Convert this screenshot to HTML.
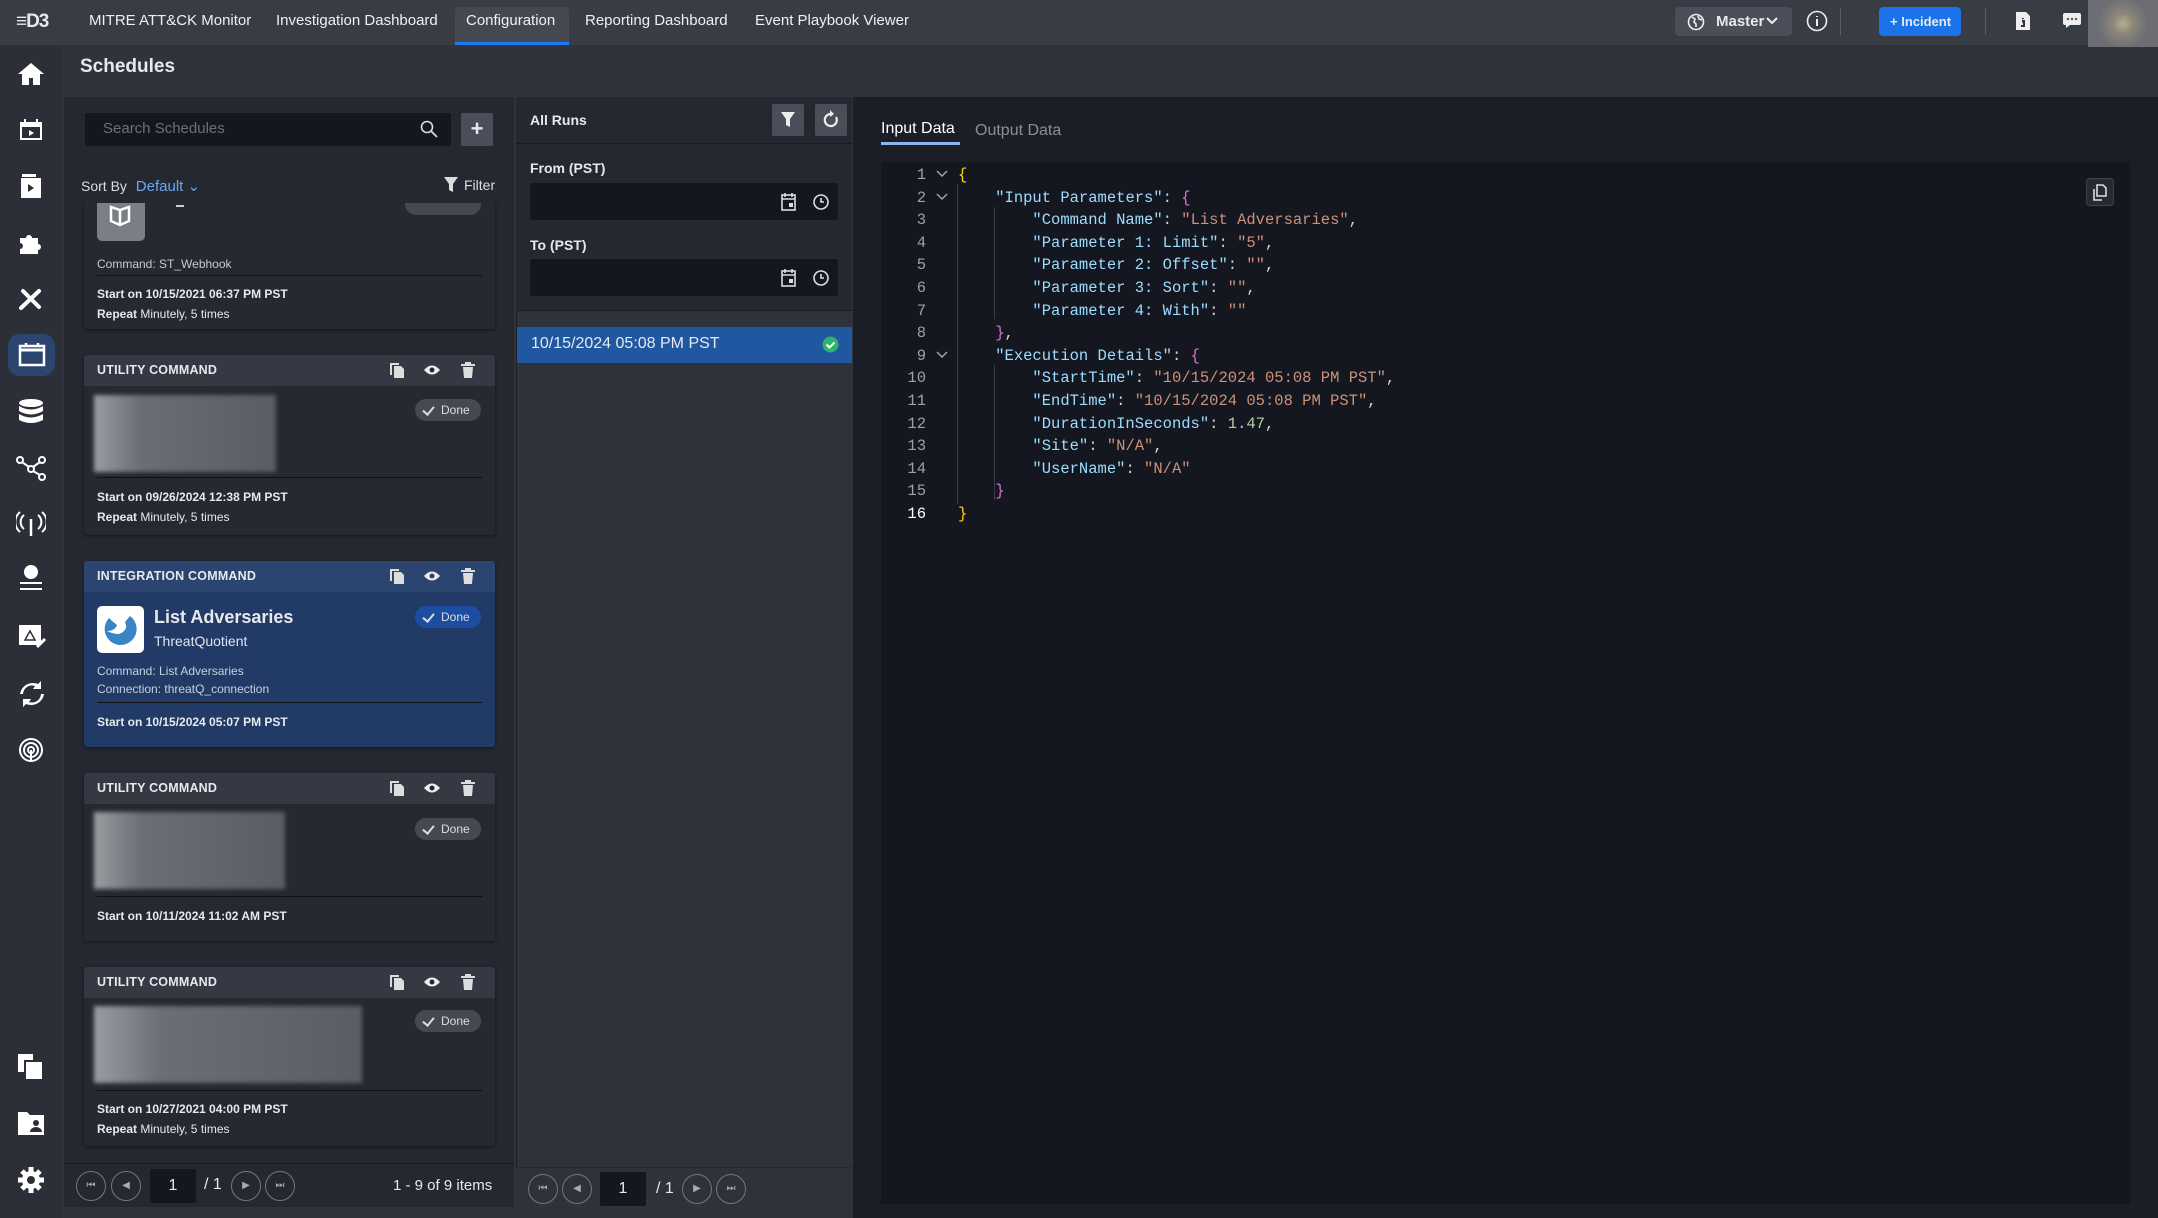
<!DOCTYPE html>
<html><head><meta charset="utf-8"><style>
*{box-sizing:border-box;margin:0;padding:0}
body{width:2158px;height:1218px;background:#30333c;font-family:"Liberation Sans",sans-serif;color:#e8e9ec;position:relative;overflow:hidden}
.a{position:absolute}
.top{left:0;top:0;width:2158px;height:45px;background:#383c45}
.nav{top:12px;font-size:15px;color:#f0f0f0}
.side{left:0;top:45px;width:63px;height:1173px;background:#2c2f37}
.card{position:absolute;left:84px;width:411px;background:#262930;border-radius:3px;box-shadow:0 1px 3px rgba(0,0,0,.5)}
.ch{position:absolute;left:0;top:0;width:100%;height:31px;background:#353943;border-radius:3px 3px 0 0}
.ct{position:absolute;left:13px;top:8px;font-size:12.5px;font-weight:bold;letter-spacing:.2px}
.ic{position:absolute;top:7px;width:16px;height:16px}
.done{position:absolute;right:14px;width:66px;height:22px;border-radius:11px;background:#454952;font-size:12px;line-height:22px;padding-left:26px;color:#ddd}
.done:before{content:"";position:absolute;left:10px;top:5px;width:5px;height:9px;border:solid #ddd;border-width:0 2px 2px 0;transform:rotate(40deg)}
.blur{position:absolute;left:10px;background:linear-gradient(90deg,#9a9ca2 0%,#6b6e75 25%,#5a5d65 100%);filter:blur(2px)}
.hr{position:absolute;left:13px;right:13px;height:1px;background:#111}
.st{position:absolute;left:13px;font-size:12px;font-weight:bold}
.rp{position:absolute;left:13px;font-size:12px}
.code{font-family:"Liberation Mono",monospace;font-size:15.5px;white-space:pre}
.ln{position:absolute;left:881px;width:45px;text-align:right;color:#9ba0aa;font-family:"Liberation Mono",monospace;font-size:15.5px}
.k{color:#9cdcfe}.s{color:#ce9178}.n{color:#b5cea8}.p{color:#da70d6}.y{color:#ffd700}.w{color:#d4d4d4}
.pg{width:30px;height:30px;border-radius:50%;border:1px solid #777;font-size:10px;color:#aaa;text-align:center;line-height:28px}
.pbox{background:#14171f;border-radius:2px;width:46px;height:34px;font-size:16px;text-align:center;line-height:34px}
</style></head><body>
<div class="a top"></div>
<div class="a" style="left:16px;top:11px;font-size:19px;font-weight:bold;letter-spacing:-1px">≡D3</div>
<div class="a nav" style="left:89px">MITRE ATT&amp;CK Monitor</div>
<div class="a nav" style="left:276px">Investigation Dashboard</div>
<div class="a" style="left:455px;top:7px;width:114px;height:38px;background:#444851;border-radius:4px 4px 0 0"></div>
<div class="a" style="left:455px;top:42px;width:114px;height:3px;background:#1e7af0"></div>
<div class="a nav" style="left:466px">Configuration</div>
<div class="a nav" style="left:585px">Reporting Dashboard</div>
<div class="a nav" style="left:755px">Event Playbook Viewer</div>
<div class="a" style="left:1675px;top:7px;width:117px;height:29px;background:#4a4e58;border-radius:4px"></div>
<svg class="a" style="left:1687px;top:13px" width="18" height="18" viewBox="0 0 18 18"><circle cx="9" cy="9" r="7.5" fill="none" stroke="#eee" stroke-width="1.6"/><path d="M5 4l3 2-1 3 2 2v3M11 3l1 3 3 1" stroke="#eee" stroke-width="1.6" fill="none"/></svg>
<div class="a" style="left:1716px;top:13px;font-size:15px;font-weight:bold">Master</div>
<svg class="a" style="left:1766px;top:17px" width="12" height="8"><path d="M1 1l5 5 5-5" stroke="#eee" stroke-width="2" fill="none"/></svg>
<svg class="a" style="left:1806px;top:10px" width="22" height="22"><circle cx="11" cy="11" r="9.5" fill="none" stroke="#eee" stroke-width="1.6"/><path d="M11 9v7M11 6v1" stroke="#eee" stroke-width="2"/></svg>
<div class="a" style="left:1840px;top:8px;width:1px;height:27px;background:#5a5e68"></div>
<div class="a" style="left:1879px;top:7px;width:82px;height:29px;background:#1a73e8;border-radius:4px;font-size:13px;font-weight:bold;line-height:29px;padding-left:11px">+ Incident</div>
<div class="a" style="left:1985px;top:8px;width:1px;height:27px;background:#5a5e68"></div>
<svg class="a" style="left:2015px;top:11px" width="16" height="20"><path d="M1 1h10l4 4v14H1z" fill="#eee"/><path d="M8 7v1M7 10h2v5M6 15h4" stroke="#333" stroke-width="2"/></svg>
<svg class="a" style="left:2062px;top:12px" width="20" height="17"><path d="M3 1h14a2 2 0 012 2v8a2 2 0 01-2 2H8l-4 3v-3H3a2 2 0 01-2-2V3a2 2 0 012-2z" fill="#eee"/><circle cx="6" cy="7" r="1.2" fill="#555"/><circle cx="10" cy="7" r="1.2" fill="#555"/><circle cx="14" cy="7" r="1.2" fill="#555"/></svg>
<div class="a" style="left:2088px;top:0;width:70px;height:47px;background:radial-gradient(circle at 50% 50%,#b8ad8e 0,#8a8678 25%,#6c6e74 60%)"></div>

<div class="a side"></div>
<div class="a" style="left:8px;top:334px;width:47px;height:42px;background:#2c4470;border-radius:12px"></div>
<svg class="a" style="left:16px;top:61px" width="30" height="26"><path d="M15 2L2 13h4v11h7v-7h4v7h7V13h4z" fill="#fff"/></svg>
<svg class="a" style="left:18px;top:117px" width="26" height="26"><rect x="2" y="5" width="22" height="18" fill="#fff"/><rect x="4" y="10" width="18" height="11" fill="#2c2f37"/><path d="M11 13l5 3-5 3z" fill="#fff"/><path d="M7 2v5M19 2v5" stroke="#fff" stroke-width="2"/></svg>
<svg class="a" style="left:19px;top:173px" width="24" height="26"><path d="M3 1h14v3H3z" fill="#fff"/><rect x="2" y="5" width="20" height="20" fill="#fff"/><path d="M9 11l6 4-6 4z" fill="#2c2f37"/></svg>
<svg class="a" style="left:17px;top:229px" width="28" height="26"><path d="M3 9h6a3 3 0 116 0h6v6a3 3 0 110 6v4H3v-5a3 3 0 100-6z" fill="#fff"/></svg>
<svg class="a" style="left:17px;top:286px" width="28" height="26"><path d="M4 22L22 5M6 5l16 16" stroke="#fff" stroke-width="4" stroke-linecap="round"/></svg>
<svg class="a" style="left:18px;top:342px" width="28" height="26"><rect x="2" y="4" width="24" height="19" fill="none" stroke="#fff" stroke-width="2.5"/><path d="M2 8h24" stroke="#fff" stroke-width="3"/><path d="M8 1v4M20 1v4" stroke="#fff" stroke-width="2.5"/></svg>
<svg class="a" style="left:17px;top:398px" width="28" height="28"><ellipse cx="14" cy="5" rx="12" ry="4" fill="#fff"/><path d="M2 8q12 7 24 0v5q-12 7-24 0zM2 16q12 7 24 0v6q-12 6-24 0z" fill="#fff"/></svg>
<svg class="a" style="left:15px;top:455px" width="32" height="26"><circle cx="5" cy="5" r="3" fill="none" stroke="#fff" stroke-width="2"/><circle cx="16" cy="14" r="3" fill="none" stroke="#fff" stroke-width="2"/><circle cx="27" cy="5" r="3" fill="none" stroke="#fff" stroke-width="2"/><circle cx="27" cy="22" r="3" fill="none" stroke="#fff" stroke-width="2"/><path d="M7 7l7 5M18 12l7-5M18 16l7 4" stroke="#fff" stroke-width="2"/></svg>
<svg class="a" style="left:16px;top:510px" width="30" height="28"><path d="M8 5a9 9 0 000 14M4 2a13 13 0 000 20M22 5a9 9 0 010 14M26 2a13 13 0 010 20" fill="none" stroke="#fff" stroke-width="2"/><path d="M15 9v17" stroke="#fff" stroke-width="2.5"/></svg>
<svg class="a" style="left:17px;top:563px" width="28" height="30"><circle cx="14" cy="9" r="7" fill="#fff"/><path d="M3 20h22M3 26h22" stroke="#fff" stroke-width="2"/></svg>
<svg class="a" style="left:17px;top:622px" width="30" height="28"><rect x="2" y="3" width="22" height="20" fill="#fff"/><path d="M8 18l5-9 5 9z" fill="none" stroke="#2c2f37" stroke-width="1.5"/><path d="M20 25l8-8" stroke="#fff" stroke-width="3"/></svg>
<svg class="a" style="left:18px;top:680px" width="28" height="28"><path d="M5 14a9 9 0 0112-8l-2 3h8V1l-3 3A13 13 0 002 14zM23 14a9 9 0 01-12 8l2-3H5v8l3-3a13 13 0 0018-10z" fill="#fff"/></svg>
<svg class="a" style="left:16px;top:735px" width="30" height="30"><g fill="none" stroke="#fff" stroke-width="2"><circle cx="15" cy="15" r="3"/><circle cx="15" cy="15" r="7"/><circle cx="15" cy="15" r="11"/><path d="M15 15v12"/></g></svg>
<svg class="a" style="left:17px;top:1053px" width="28" height="28"><rect x="1" y="1" width="15" height="18" fill="#fff"/><rect x="8" y="8" width="18" height="19" fill="#fff" stroke="#2c2f37" stroke-width="2"/></svg>
<svg class="a" style="left:17px;top:1110px" width="28" height="26"><path d="M1 2h9l3 3h14v20H1z" fill="#fff"/><circle cx="19" cy="13" r="3" fill="#2c2f37"/><path d="M13 22a6 5 0 0112 0z" fill="#2c2f37"/></svg>
<svg class="a" style="left:17px;top:1166px" width="28" height="28"><circle cx="14" cy="14" r="9" fill="#fff"/><g stroke="#fff" stroke-width="5"><path d="M14 1v26M1 14h26M5 5l18 18M23 5L5 23"/></g><circle cx="14" cy="14" r="4" fill="#2c2f37"/></svg>

<div class="a" style="left:80px;top:56px;font-size:19px;font-weight:bold">Schedules</div>

<!-- left panel -->
<div class="a" style="left:64px;top:97px;width:450px;height:1110px;background:#252830"></div>
<div class="a" style="left:85px;top:113px;width:366px;height:33px;background:#14171f;border-radius:2px"></div>
<div class="a" style="left:103px;top:120px;font-size:15px;color:#6b707a">Search Schedules</div>
<svg class="a" style="left:420px;top:120px" width="18" height="18"><circle cx="7" cy="7" r="5.5" fill="none" stroke="#ddd" stroke-width="1.6"/><path d="M11 11l6 6" stroke="#ddd" stroke-width="1.8"/></svg>
<div class="a" style="left:461px;top:113px;width:32px;height:33px;background:#4a4e58;border-radius:2px;text-align:center;font-size:22px;line-height:31px;font-weight:bold">+</div>
<div class="a" style="left:81px;top:177px;font-size:14px;color:#ddd">Sort By <span style="color:#6aa8ef;font-size:15px;margin-left:5px">Default ⌄</span></div>
<svg class="a" style="left:444px;top:177px" width="14" height="15"><path d="M0 0h14L9 7v8L5 13V7z" fill="#ddd"/></svg>
<div class="a" style="left:464px;top:177px;font-size:14px;color:#ddd">Filter</div>

<div class="a" style="left:64px;top:203px;width:450px;height:200px;overflow:hidden">
 <div class="card" style="top:-40px;left:20px;height:166px">
  <div style="position:absolute;left:13px;top:30px;width:48px;height:48px;background:#7b7e86;border-radius:5px"></div>
  <svg style="position:absolute;left:24px;top:40px" width="24" height="24"><path d="M3 4l9 3 9-3v14l-9 4-9-4z" fill="none" stroke="#fff" stroke-width="2.5"/><path d="M12 7v15" stroke="#fff" stroke-width="2.5"/></svg>
  <div style="position:absolute;left:92px;top:42px;width:8px;height:2px;background:#ccc"></div>
  <div style="position:absolute;right:14px;top:30px;width:76px;height:22px;border-radius:11px;background:#454952"></div>
  <div class="rp" style="top:94px;color:#c8cad0">Command: ST_Webhook</div>
  <div class="hr" style="top:112px"></div>
  <div class="st" style="top:124px">Start on 10/15/2021 06:37 PM PST</div>
  <div class="rp" style="top:144px"><b>Repeat</b> Minutely, 5 times</div>
 </div>
</div>

<div class="card" style="top:355px;height:180px">
 <div class="ch"></div><div class="ct">UTILITY COMMAND</div>
 <svg class="ic" style="left:305px" viewBox="0 0 16 16"><path d="M1 1h9v2H3v10H1zM5 4h7l3 3v9H5z" fill="#ddd"/></svg>
 <svg class="ic" style="left:340px" viewBox="0 0 16 16"><path d="M0 8q8-9 16 0-8 9-16 0z" fill="#eee"/><circle cx="8" cy="8" r="2.5" fill="#262930"/></svg>
 <svg class="ic" style="left:376px" viewBox="0 0 16 16"><path d="M1 2h14v2H1zM5 0h6v2H5zM3 5h10l-1 11H4z" fill="#ddd"/></svg>
 <div class="blur" style="top:40px;width:182px;height:77px"></div>
 <div class="done" style="top:44px">Done</div>
 <div class="hr" style="top:122px"></div>
 <div class="st" style="top:135px">Start on 09/26/2024 12:38 PM PST</div>
 <div class="rp" style="top:155px"><b>Repeat</b> Minutely, 5 times</div>
</div>

<div class="card" style="top:561px;height:186px;background:#213a66">
 <div class="ch" style="background:#2c4470"></div><div class="ct">INTEGRATION COMMAND</div>
 <svg class="ic" style="left:305px" viewBox="0 0 16 16"><path d="M1 1h9v2H3v10H1zM5 4h7l3 3v9H5z" fill="#ddd"/></svg>
 <svg class="ic" style="left:340px" viewBox="0 0 16 16"><path d="M0 8q8-9 16 0-8 9-16 0z" fill="#eee"/><circle cx="8" cy="8" r="2.5" fill="#2c4470"/></svg>
 <svg class="ic" style="left:376px" viewBox="0 0 16 16"><path d="M1 2h14v2H1zM5 0h6v2H5zM3 5h10l-1 11H4z" fill="#ddd"/></svg>
 <div style="position:absolute;left:13px;top:45px;width:47px;height:47px;background:#fff;border-radius:5px"></div>
 <svg style="position:absolute;left:17px;top:49px" width="40" height="40"><path d="M8 8a16 16 0 1021 -2l-5 6q4 8-6 12-6 0-12 -3q8 0 10-6-4-3-8-7z" fill="#3a84c6"/></svg>
 <div style="position:absolute;left:70px;top:46px;font-size:18px;font-weight:bold">List Adversaries</div>
 <div style="position:absolute;left:70px;top:72px;font-size:14px;color:#e0e4ee">ThreatQuotient</div>
 <div class="done" style="top:45px;background:#1c4da0">Done</div>
 <div class="rp" style="top:103px;color:#c8d0e0">Command: List Adversaries</div>
 <div class="rp" style="top:121px;color:#c8d0e0">Connection: threatQ_connection</div>
 <div class="hr" style="top:141px"></div>
 <div class="st" style="top:154px">Start on 10/15/2024 05:07 PM PST</div>
</div>

<div class="card" style="top:773px;height:168px">
 <div class="ch"></div><div class="ct">UTILITY COMMAND</div>
 <svg class="ic" style="left:305px" viewBox="0 0 16 16"><path d="M1 1h9v2H3v10H1zM5 4h7l3 3v9H5z" fill="#ddd"/></svg>
 <svg class="ic" style="left:340px" viewBox="0 0 16 16"><path d="M0 8q8-9 16 0-8 9-16 0z" fill="#eee"/><circle cx="8" cy="8" r="2.5" fill="#262930"/></svg>
 <svg class="ic" style="left:376px" viewBox="0 0 16 16"><path d="M1 2h14v2H1zM5 0h6v2H5zM3 5h10l-1 11H4z" fill="#ddd"/></svg>
 <div class="blur" style="top:39px;width:191px;height:77px"></div>
 <div class="done" style="top:45px">Done</div>
 <div class="hr" style="top:123px"></div>
 <div class="st" style="top:136px">Start on 10/11/2024 11:02 AM PST</div>
</div>

<div class="card" style="top:967px;height:179px">
 <div class="ch"></div><div class="ct">UTILITY COMMAND</div>
 <svg class="ic" style="left:305px" viewBox="0 0 16 16"><path d="M1 1h9v2H3v10H1zM5 4h7l3 3v9H5z" fill="#ddd"/></svg>
 <svg class="ic" style="left:340px" viewBox="0 0 16 16"><path d="M0 8q8-9 16 0-8 9-16 0z" fill="#eee"/><circle cx="8" cy="8" r="2.5" fill="#262930"/></svg>
 <svg class="ic" style="left:376px" viewBox="0 0 16 16"><path d="M1 2h14v2H1zM5 0h6v2H5zM3 5h10l-1 11H4z" fill="#ddd"/></svg>
 <div class="blur" style="top:39px;width:268px;height:77px"></div>
 <div class="done" style="top:43px">Done</div>
 <div class="hr" style="top:123px"></div>
 <div class="st" style="top:135px">Start on 10/27/2021 04:00 PM PST</div>
 <div class="rp" style="top:155px"><b>Repeat</b> Minutely, 5 times</div>
</div>

<div class="a" style="left:64px;top:1163px;width:450px;height:1px;background:#1a1c22"></div>
<div class="a pg" style="left:76px;top:1171px">⏮</div><div class="a pg" style="left:111px;top:1171px">◀</div>
<div class="a pbox" style="left:150px;top:1169px">1</div>
<div class="a" style="left:204px;top:1176px;font-size:16px">/ 1</div>
<div class="a pg" style="left:231px;top:1171px">▶</div><div class="a pg" style="left:265px;top:1171px">⏭</div>
<div class="a" style="left:393px;top:1177px;font-size:15px">1 - 9 of 9 items</div>

<!-- middle panel -->
<div class="a" style="left:516px;top:97px;width:336px;height:1121px;background:#2e323b;border-left:1px solid #1c1e24"></div>
<div class="a" style="left:516px;top:97px;width:336px;height:213px;background:#252830"></div>
<div class="a" style="left:516px;top:143px;width:336px;height:1px;background:#1a1c22"></div>
<div class="a" style="left:530px;top:112px;font-size:14px;font-weight:bold">All Runs</div>
<div class="a" style="left:772px;top:104px;width:32px;height:32px;background:#4a4e58;border-radius:2px"></div>
<svg class="a" style="left:781px;top:112px" width="14" height="16"><path d="M0 0h14L9 7v8L5 13V7z" fill="#eee"/></svg>
<div class="a" style="left:815px;top:104px;width:32px;height:32px;background:#4a4e58;border-radius:2px"></div>
<svg class="a" style="left:822px;top:110px" width="18" height="20"><path d="M14 7a6 6 0 11-5-3" fill="none" stroke="#eee" stroke-width="2.2"/><path d="M8 0l4 4-4 3z" fill="#eee"/></svg>
<div class="a" style="left:530px;top:160px;font-size:14px;font-weight:bold">From (PST)</div>
<div class="a" style="left:530px;top:183px;width:308px;height:37px;background:#14171f;border-radius:2px"></div>
<div class="a" style="left:530px;top:237px;font-size:14px;font-weight:bold">To (PST)</div>
<div class="a" style="left:530px;top:259px;width:308px;height:37px;background:#14171f;border-radius:2px"></div>
<svg class="a" style="left:781px;top:192px" width="50" height="20"><rect x="1" y="3" width="13" height="15" fill="none" stroke="#ddd" stroke-width="1.6"/><path d="M1 7h13M4 1v4M11 1v4" stroke="#ddd" stroke-width="1.6"/><rect x="8" y="11" width="4" height="4" fill="#ddd"/><circle cx="40" cy="10" r="7" fill="none" stroke="#ddd" stroke-width="1.6"/><path d="M40 6v4h3" stroke="#ddd" stroke-width="1.6" fill="none"/></svg>
<svg class="a" style="left:781px;top:268px" width="50" height="20"><rect x="1" y="3" width="13" height="15" fill="none" stroke="#ddd" stroke-width="1.6"/><path d="M1 7h13M4 1v4M11 1v4" stroke="#ddd" stroke-width="1.6"/><rect x="8" y="11" width="4" height="4" fill="#ddd"/><circle cx="40" cy="10" r="7" fill="none" stroke="#ddd" stroke-width="1.6"/><path d="M40 6v4h3" stroke="#ddd" stroke-width="1.6" fill="none"/></svg>
<div class="a" style="left:516px;top:310px;width:336px;height:1px;background:#1a1c22"></div>
<div class="a" style="left:517px;top:327px;width:335px;height:36px;background:#1f57a0"></div>
<div class="a" style="left:531px;top:335px;font-size:16px">10/15/2024 05:08 PM PST</div>
<svg class="a" style="left:822px;top:336px" width="17" height="17"><circle cx="8.5" cy="8.5" r="8" fill="#2fb36a"/><path d="M4.5 8.5l3 3 5-5" stroke="#fff" stroke-width="2" fill="none"/></svg>
<div class="a" style="left:516px;top:1167px;width:336px;height:51px;background:#2e323b;border-top:1px solid #262930"></div>
<div class="a pg" style="left:528px;top:1174px">⏮</div><div class="a pg" style="left:562px;top:1174px">◀</div>
<div class="a pbox" style="left:600px;top:1172px">1</div>
<div class="a" style="left:656px;top:1180px;font-size:16px">/ 1</div>
<div class="a pg" style="left:682px;top:1174px">▶</div><div class="a pg" style="left:716px;top:1174px">⏭</div>

<!-- right panel -->
<div class="a" style="left:853px;top:97px;width:1305px;height:1121px;background:#1b1e27"></div>
<div class="a" style="left:881px;top:120px;font-size:16px;color:#fff">Input Data</div>
<div class="a" style="left:881px;top:142px;width:79px;height:3px;background:#8ab4f0"></div>
<div class="a" style="left:975px;top:122px;font-size:16px;color:#8a8f99">Output Data</div>
<div class="a" style="left:881px;top:162px;width:1249px;height:1042px;background:#141720"></div>
<div class="a" style="left:2086px;top:178px;width:28px;height:28px;background:#262a33;border:1px solid #444;border-radius:4px"></div>
<svg class="a" style="left:2092px;top:184px" width="16" height="17"><path d="M5 1h6l3 3v8H5zM2 5v11h8" fill="none" stroke="#ddd" stroke-width="1.6"/></svg>
<div class="a" style="left:957px;top:184px;width:1px;height:320px;background:#3a3d45"></div>
<div class="a" style="left:994px;top:207px;width:1px;height:112px;background:#3a3d45"></div>
<div class="a" style="left:994px;top:365px;width:1px;height:135px;background:#3a3d45"></div>

<div class="ln" style="top:164px;line-height:22.6px">1<br>2<br>3<br>4<br>5<br>6<br>7<br>8<br>9<br>10<br>11<br>12<br>13<br>14<br>15<br><span style="color:#fff">16</span></div>
<svg class="a" style="left:935px;top:168px" width="14" height="200"><path d="M2 3l5 5 5-5M2 26l5 5 5-5M2 184l5 5 5-5" stroke="#aaa" stroke-width="1.4" fill="none"/></svg>
<div class="a code" style="left:958px;top:164px;line-height:22.6px"><span class="y">{</span>
    <span class="k">"Input Parameters"</span><span class="w">: </span><span class="p">{</span>
        <span class="k">"Command Name"</span><span class="w">: </span><span class="s">"List Adversaries"</span><span class="w">,</span>
        <span class="k">"Parameter 1: Limit"</span><span class="w">: </span><span class="s">"5"</span><span class="w">,</span>
        <span class="k">"Parameter 2: Offset"</span><span class="w">: </span><span class="s">""</span><span class="w">,</span>
        <span class="k">"Parameter 3: Sort"</span><span class="w">: </span><span class="s">""</span><span class="w">,</span>
        <span class="k">"Parameter 4: With"</span><span class="w">: </span><span class="s">""</span>
    <span class="p">}</span><span class="w">,</span>
    <span class="k">"Execution Details"</span><span class="w">: </span><span class="p">{</span>
        <span class="k">"StartTime"</span><span class="w">: </span><span class="s">"10/15/2024 05:08 PM PST"</span><span class="w">,</span>
        <span class="k">"EndTime"</span><span class="w">: </span><span class="s">"10/15/2024 05:08 PM PST"</span><span class="w">,</span>
        <span class="k">"DurationInSeconds"</span><span class="w">: </span><span class="n">1.47</span><span class="w">,</span>
        <span class="k">"Site"</span><span class="w">: </span><span class="s">"N/A"</span><span class="w">,</span>
        <span class="k">"UserName"</span><span class="w">: </span><span class="s">"N/A"</span>
    <span class="p">}</span>
<span class="y">}</span></div>
</body></html>
